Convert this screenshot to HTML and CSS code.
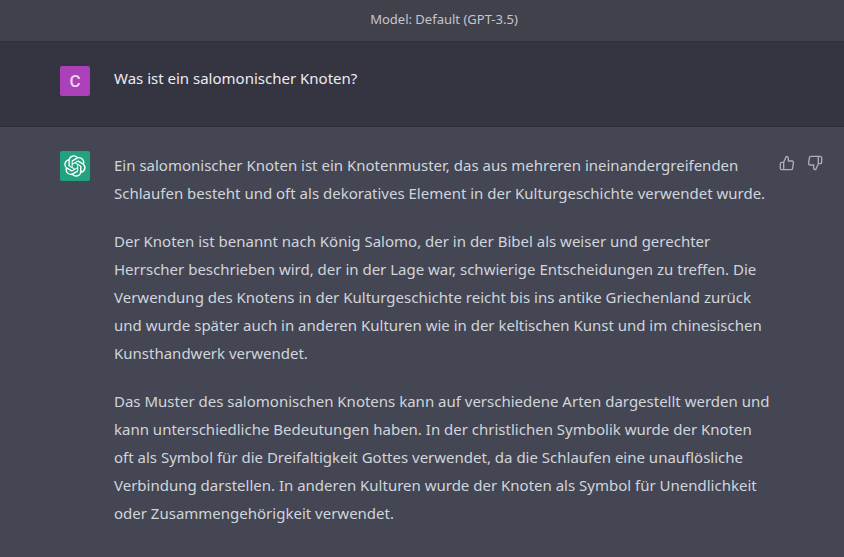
FILE: index.html
```html
<!DOCTYPE html>
<html lang="de">

<head>
    <meta charset="UTF-8">
    <title>Salomonischer Knoten</title>
    <meta name="viewport" content="width=device-width, initial-scale=1">
    <link rel="stylesheet" href="styles.css">
</head>

<body>
    <header class="model-bar">Model: Default (GPT-3.5)</header>
    <main class="chat">
        <section class="message message-user">
            <div class="message-inner">
                <div class="avatar avatar-user">C</div>
                <div class="message-text">
                    <p>Was ist ein salomonischer Knoten?</p>
                </div>
            </div>
        </section>
        <section class="message message-bot">
            <div class="message-inner">
                <div class="avatar avatar-bot">
                    <svg class="logo" viewBox="0 0 41 41" aria-hidden="true">
                        <path fill="currentColor" d="M37.532 16.87a9.963 9.963 0 0 0-.856-8.184 10.078 10.078 0 0 0-10.855-4.835A9.964 9.964 0 0 0 18.306.5a10.079 10.079 0 0 0-9.614 6.977 9.967 9.967 0 0 0-6.664 4.834 10.08 10.08 0 0 0 1.24 11.817 9.965 9.965 0 0 0 .856 8.185 10.079 10.079 0 0 0 10.855 4.835 9.965 9.965 0 0 0 7.516 3.35 10.078 10.078 0 0 0 9.617-6.981 9.967 9.967 0 0 0 6.663-4.834 10.079 10.079 0 0 0-1.243-11.813ZM22.498 37.886a7.474 7.474 0 0 1-4.799-1.735c.061-.033.168-.091.237-.134l7.964-4.6a1.294 1.294 0 0 0 .655-1.134V19.054l3.366 1.944a.12.12 0 0 1 .066.092v9.299a7.505 7.505 0 0 1-7.49 7.496ZM6.392 31.006a7.471 7.471 0 0 1-.894-5.023c.06.036.162.099.237.141l7.964 4.6a1.297 1.297 0 0 0 1.308 0l9.724-5.614v3.888a.12.12 0 0 1-.048.103l-8.051 4.649a7.504 7.504 0 0 1-10.24-2.744ZM4.297 13.62A7.469 7.469 0 0 1 8.2 10.333c0 .068-.004.19-.004.274v9.201a1.294 1.294 0 0 0 .654 1.132l9.723 5.614-3.366 1.944a.12.12 0 0 1-.114.01L7.04 23.856a7.504 7.504 0 0 1-2.743-10.237Zm27.658 6.437-9.724-5.615 3.367-1.943a.121.121 0 0 1 .113-.01l8.052 4.648a7.498 7.498 0 0 1-1.158 13.528v-9.476a1.293 1.293 0 0 0-.65-1.132Zm3.35-5.043c-.059-.037-.162-.099-.236-.141l-7.965-4.6a1.298 1.298 0 0 0-1.308 0l-9.723 5.614v-3.888a.12.12 0 0 1 .048-.103l8.05-4.645a7.497 7.497 0 0 1 11.135 7.763Zm-21.063 6.929-3.367-1.944a.12.12 0 0 1-.065-.092v-9.299a7.497 7.497 0 0 1 12.293-5.756 6.94 6.94 0 0 0-.236.134l-7.965 4.6a1.294 1.294 0 0 0-.654 1.132l-.006 11.225Zm1.829-3.943 4.33-2.501 4.332 2.5v5l-4.331 2.5-4.331-2.5V18Z"/>
                    </svg>
                </div>
                <div class="message-text">
                    <p>Ein salomonischer Knoten ist ein Knotenmuster, das aus mehreren ineinandergreifenden Schlaufen besteht und oft als dekoratives Element in der Kulturgeschichte verwendet wurde.</p>
                    <p>Der Knoten ist benannt nach König Salomo, der in der Bibel als weiser und gerechter Herrscher beschrieben wird, der in der Lage war, schwierige Entscheidungen zu treffen. Die Verwendung des Knotens in der Kulturgeschichte reicht bis ins antike Griechenland zurück und wurde später auch in anderen Kulturen wie in der keltischen Kunst und im chinesischen Kunsthandwerk verwendet.</p>
                    <p>Das Muster des salomonischen Knotens kann auf verschiedene Arten dargestellt werden und kann unterschiedliche Bedeutungen haben. In der christlichen Symbolik wurde der Knoten oft als Symbol für die Dreifaltigkeit Gottes verwendet, da die Schlaufen eine unauflösliche Verbindung darstellen. In anderen Kulturen wurde der Knoten als Symbol für Unendlichkeit oder Zusammengehörigkeit verwendet.</p>
                </div>
                <div class="feedback">
                    <button class="feedback-btn" type="button" aria-label="Gute Antwort">
                        <svg viewBox="0 0 24 24" aria-hidden="true">
                            <path d="M14 9V5a3 3 0 0 0-3-3l-4 9v11h11.28a2 2 0 0 0 2-1.7l1.38-9a2 2 0 0 0-2-2.3zM7 22H4a2 2 0 0 1-2-2v-7a2 2 0 0 1 2-2h3"/>
                        </svg>
                    </button>
                    <button class="feedback-btn" type="button" aria-label="Schlechte Antwort">
                        <svg viewBox="0 0 24 24" aria-hidden="true">
                            <path d="M10 15v4a3 3 0 0 0 3 3l4-9V2H5.720a2 2 0 0 0-2 1.700l-1.380 9a2 2 0 0 0 2 2.300zm7-13h2.670A2.310 2.310 0 0 1 22 4v7a2.310 2.310 0 0 1-2.330 2H17"/>
                        </svg>
                    </button>
                </div>
            </div>
        </section>
    </main>
</body>

</html>
```
FILE: styles.css
```css
* {
    box-sizing: border-box;
}

body {
    margin: 0;
    background: #444654;
    color: #d1d5db;
    font-family: 'Segoe UI', 'Noto Sans', sans-serif;
    font-size: 15px;
    line-height: 28px;
}

.model-bar {
    padding: 9px 0 12px 44px;
    border-bottom: 1px solid #2f3039;
    background: #40414b;
    color: #c5c5d2;
    font-size: 13px;
    line-height: 20px;
    text-align: center;
}

.message-inner {
    display: flex;
    padding: 24px 17px 24px 60px;
}

.message-user {
    border-bottom: 1px solid #2b2c34;
    background: #343541;
    color: #ececf1;
    line-height: 24px;
}

.message-user .message-inner {
    padding-bottom: 30px;
}

.avatar {
    display: flex;
    flex: none;
    align-items: center;
    justify-content: center;
    width: 30px;
    height: 30px;
    margin-right: 24px;
    border-radius: 2px;
    color: #fff;
}

.avatar-user {
    background: #ab40b8;
    color: #eed5f1;
    font-family: Roboto, sans-serif;
    font-size: 17px;
    font-weight: 500;
}

.avatar-bot {
    background: #22a37f;
}

.logo {
    width: 22px;
    height: 22px;
}

.message-text {
    flex: 1;
    min-width: 0;
}

.message-text p {
    margin: 0 0 20px;
}

.message-text p:last-child {
    margin-bottom: 0;
}

.feedback {
    display: flex;
    flex: none;
    align-items: flex-start;
    gap: 4px;
    margin-left: 4px;
}

.feedback-btn {
    padding: 4px;
    border: none;
    border-radius: 6px;
    background: none;
    color: #acacbe;
    line-height: 0;
    cursor: pointer;
}

.feedback-btn:hover {
    background: #343541;
}

.feedback-btn svg {
    width: 16px;
    height: 16px;
    fill: none;
    stroke: currentColor;
    stroke-width: 2;
    stroke-linecap: round;
    stroke-linejoin: round;
}
```
